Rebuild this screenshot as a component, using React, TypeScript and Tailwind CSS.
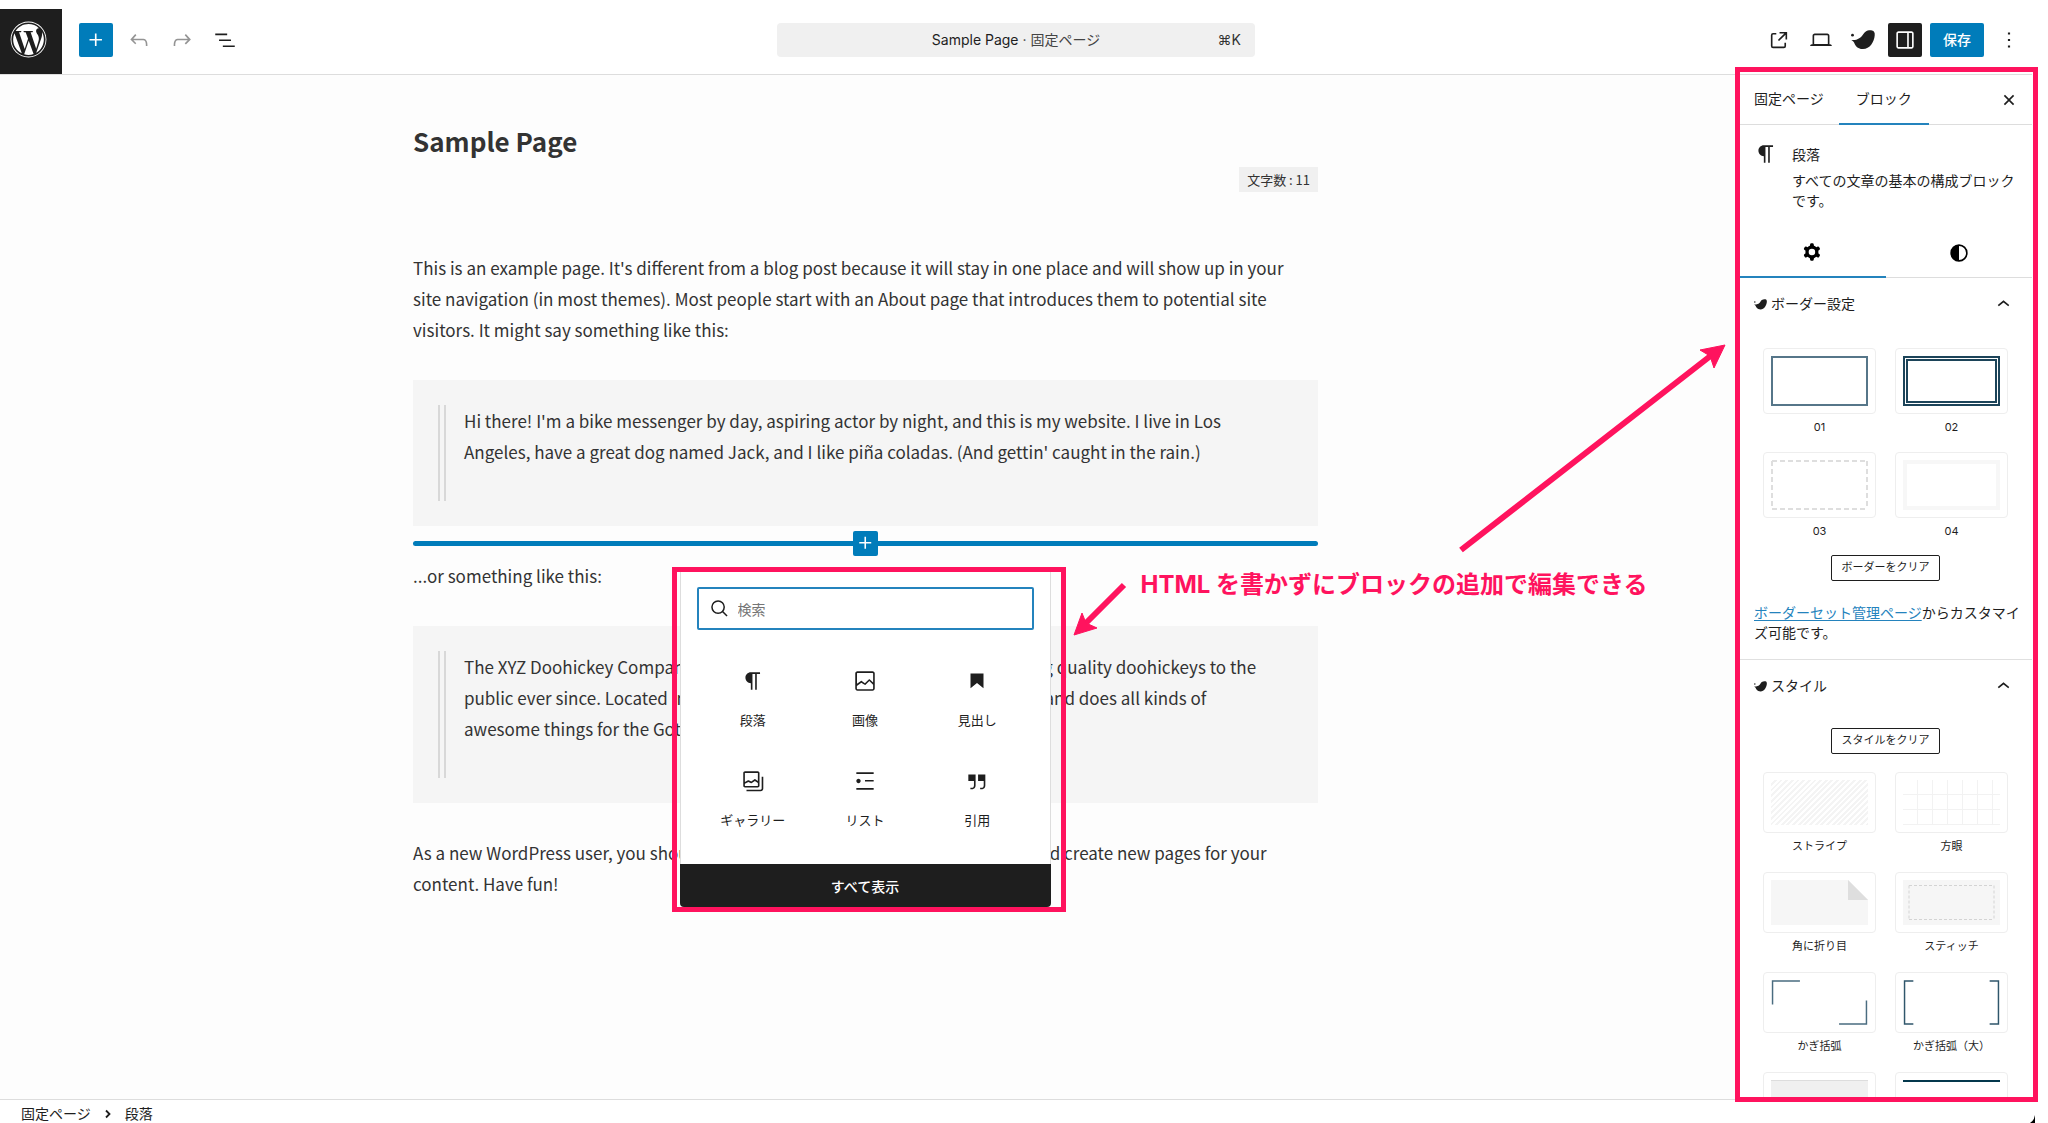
import type { ReactNode } from "react";
import { FaWordpress } from "react-icons/fa";

const Icon = ({ d, className = "size-[26px]" }: { d: string; className?: string }) => (
  <svg viewBox="0 0 24 24" fill="currentColor" fillRule="evenodd" className={className} aria-hidden="true">
    <path d={d} />
  </svg>
);

const icons = {
  plus: "M11 12.5V17.5H12.5V12.5H17.5V11H12.5V6H11V11H6V12.5H11Z",
  undo: "M18.3 11.7c-.6-.6-1.4-.9-2.3-.9H6.7l2.9-3.3-1.1-1-4.5 5L8.5 16l1-1-2.7-2.7H16c.5 0 .9.2 1.3.5 1 1 1 3.4 1 4.5v.3h1.5v-.2c0-1.5 0-4.3-1.5-5.7z",
  redo: "M15.6 6.5l-1.1 1 2.9 3.3H8c-.9 0-1.7.3-2.3.9-1.4 1.5-1.4 4.2-1.4 5.6v.2h1.5v-.3c0-1.1 0-3.5 1-4.5.3-.3.7-.5 1.3-.5h9.2L14.5 15l1.1 1.1 4.6-4.6-4.6-5z",
  listView: "M3 6h11v1.5H3V6Zm3.5 5.5h11V13h-11v-1.5ZM21 17H10v1.5h11V17Z",
  external: "M19.5 4.5h-7V6h4.44l-5.97 5.97 1.06 1.06L18 7.06v4.44h1.5v-7Zm-13 1a2 2 0 0 0-2 2v10a2 2 0 0 0 2 2h10a2 2 0 0 0 2-2v-3H17v3a.5.5 0 0 1-.5.5h-10a.5.5 0 0 1-.5-.5v-10a.5.5 0 0 1 .5-.5h3V5.5h-3Z",
  desktop: "M20.5 16h-.7V8c0-1.1-.9-2-2-2H6.2c-1.1 0-2 .9-2 2v8h-.7c-.8 0-1.5.7-1.5 1.5h20c0-.8-.7-1.5-1.5-1.5zM5.7 8c0-.3.2-.5.5-.5h11.6c.3 0 .5.2.5.5v7.6H5.7V8z",
  drawer: "M18 4H6c-1.1 0-2 .9-2 2v12c0 1.1.9 2 2 2h12c1.1 0 2-.9 2-2V6c0-1.1-.9-2-2-2zm-4 14.5H6c-.3 0-.5-.2-.5-.5V6c0-.3.2-.5.5-.5h8v13zm4.5-.5c0 .3-.2.5-.5.5h-2.5v-13H18c.3 0 .5.2.5.5v12z",
  more: "M13 19h-2v-2h2v2zm0-6h-2v-2h2v2zm0-6h-2V5h2v2z",
  close: "M12 13.06l3.712 3.713 1.061-1.06L13.061 12l3.712-3.712-1.06-1.06L12 10.938 8.288 7.227l-1.061 1.06L10.939 12l-3.712 3.712 1.06 1.061L12 13.061z",
  paragraph: "m9.99609 14v-.2251l.00391.0001v6.225h1.5v-14.5h2.5v14.5h1.5v-14.5h3v-1.5h-8.50391c-2.76142 0-5 2.23858-5 5 0 2.7614 2.23858 5 5 5z",
  image: "M19 3H5c-1.1 0-2 .9-2 2v14c0 1.1.9 2 2 2h14c1.1 0 2-.9 2-2V5c0-1.1-.9-2-2-2zM5 4.5h14c.3 0 .5.2.5.5v8.4l-3-2.9c-.3-.3-.8-.3-1 0L11.9 14 9 12c-.3-.2-.6-.2-.8 0l-3.6 2.6V5c-.1-.3.1-.5.4-.5zm14 15H5c-.3 0-.5-.2-.5-.5v-2.4l4.1-3 3 1.9c.3.2.7.2.9-.1L16 12l3.5 3.4V19c0 .3-.2.5-.5.5z",
  heading: "M6 5V18.5911L12 13.8473L18 18.5911V5H6Z",
  gallery: "M16.375 4.5H4.625a.125.125 0 0 0-.125.125v8.254l2.859-1.54a.75.75 0 0 1 .68-.016l2.384 1.142 2.89-2.074a.75.75 0 0 1 .874 0l2.313 1.66V4.625a.125.125 0 0 0-.125-.125Zm.125 9.398-2.75-1.975-2.813 2.02a.75.75 0 0 1-.76.067l-2.444-1.17L4.5 14.583v1.792c0 .069.056.125.125.125h11.75a.125.125 0 0 0 .125-.125v-2.477ZM4.625 3C3.728 3 3 3.728 3 4.625v11.75C3 17.273 3.728 18 4.625 18h11.75c.898 0 1.625-.727 1.625-1.625V4.625C18 3.728 17.273 3 16.375 3H4.625ZM20 8v11c0 .69-.31 1-.999 1H6v1.5h13.001c1.52 0 2.499-.982 2.499-2.5V8H20Z",
  list: "M4 4v1.5h16V4H4zm8 8.5h8V11h-8v1.5zM4 20h16v-1.5H4V20zm4-8c0-1.1-.9-2-2-2s-2 .9-2 2 .9 2 2 2 2-.9 2-2z",
  quote: "M13 6v6h5.2v4c0 .8-.2 1.4-.5 1.7-.6.6-1.6.6-2.5.5h-.3v1.5h.5c1 0 2.3-.1 3.3-1 .6-.6 1-1.6 1-2.8V6H13zm-9 6h5.2v4c0 .8-.2 1.4-.5 1.7-.6.6-1.6.6-2.5.5h-.3v1.5h.5c1 0 2.3-.1 3.3-1 .6-.6 1-1.6 1-2.8V6H4v6z",
  cog: "M10.289 4.836A1 1 0 0111.275 4h1.306a1 1 0 01.987.836l.244 1.466c.787.26 1.503.679 2.108 1.218l1.393-.522a1 1 0 011.216.437l.653 1.13a1 1 0 01-.23 1.273l-1.148.944a6.025 6.025 0 010 2.435l1.149.946a1 1 0 01.23 1.272l-.653 1.13a1 1 0 01-1.216.437l-1.394-.522c-.605.54-1.32.958-2.108 1.218l-.244 1.466a1 1 0 01-.987.836h-1.306a1 1 0 01-.986-.836l-.244-1.466a5.995 5.995 0 01-2.108-1.218l-1.394.522a1 1 0 01-1.217-.436l-.653-1.131a1 1 0 01.23-1.272l1.149-.946a6.026 6.026 0 010-2.435l-1.148-.944a1 1 0 01-.23-1.272l.653-1.131a1 1 0 011.217-.437l1.393.522a5.994 5.994 0 012.108-1.218l.244-1.466zM14.929 12a3 3 0 11-6 0 3 3 0 016 0z",
  styles: "M20 12a8 8 0 1 1-16 0 8 8 0 0 1 16 0Zm-1.5 0a6.5 6.5 0 0 1-6.5 6.5v-13a6.5 6.5 0 0 1 6.5 6.5Z",
  chevronUp: "M6.5 12.4L12 8l5.5 4.4-.9 1.2L12 10l-4.5 3.6-1-1.2z",
};

const Bird = ({ className }: { className: string }) => (
  <svg viewBox="0 0 24 20" fill="currentColor" className={className} aria-hidden="true">
    <circle cx="1.5" cy="5.2" r="1.4" />
    <path d="M.3 10C2 10.100 3.600 10.200 5.300 9.700 7.500 9 9.200 8.100 10.500 6.600 12 4.900 12.800 2.900 14.500 1.700 16.300.4 19 .1 21 .5 23.200 1 24 2.800 23.700 5.400 23.400 8.600 22.300 11.800 20.200 14.700 18.300 17.300 15.300 19 12 19 9 19 6.700 18.100 5.100 16.200 3.800 14.700 3.600 12.900 2.500 11.700 1.900 11 1.100 10.600.3 10Z" />
  </svg>
);

const ToolButton = ({ label, className = "", children }: { label: string; className?: string; children: ReactNode }) => (
  <button type="button" aria-label={label} className={`flex size-[34px] shrink-0 items-center justify-center rounded-xs ${className}`}>
    {children}
  </button>
);

const Header = () => (
  <header className="mt-[9px] grid h-[66px] shrink-0 grid-cols-[1fr_478px_1fr] items-stretch border-b border-[#ddd]">
    <div className="flex">
      <a href="#" aria-label="WordPress" className="mr-[17px] flex w-[62px] items-center justify-center bg-[#1e1e1e] pr-1.5 pb-1 text-white">
        <FaWordpress className="size-[37px]" />
      </a>
      <div className="flex items-center gap-[9px] pb-1">
        <ToolButton label="追加" className="bg-[#007cba] text-white"><Icon d={icons.plus} /></ToolButton>
        <ToolButton label="元に戻す" className="text-[#949494]"><Icon d={icons.undo} /></ToolButton>
        <ToolButton label="やり直す" className="text-[#949494]"><Icon d={icons.redo} /></ToolButton>
        <ToolButton label="リスト表示"><Icon d={icons.listView} /></ToolButton>
      </div>
    </div>
    <button type="button" className="relative mb-1 flex h-[34px] items-center justify-center self-center rounded bg-[#f0f0f0] text-sm">
      <span>Sample Page</span>
      <span className="text-[#444]">&nbsp;· 固定ページ</span>
      <span className="absolute right-3.5 text-[#333]">⌘K</span>
    </button>
    <div className="flex items-center justify-end gap-2 pr-1.5 pb-1">
      <ToolButton label="表示"><Icon d={icons.external} /></ToolButton>
      <ToolButton label="プレビュー"><Icon d={icons.desktop} /></ToolButton>
      <ToolButton label="SWELL"><Bird className="h-5 w-6" /></ToolButton>
      <ToolButton label="設定" className="bg-[#1e1e1e] text-white"><Icon d={icons.drawer} /></ToolButton>
      <button type="button" className="h-[34px] rounded-xs bg-[#007cba] px-[13px] text-sm font-medium text-white">保存</button>
      <ToolButton label="オプション"><Icon d={icons.more} /></ToolButton>
    </div>
  </header>
);

const Quote = ({ children }: { children: ReactNode }) => (
  <blockquote className="flex gap-[18px] bg-[#f5f5f5] p-[25px]">
    <div className="w-2 shrink-0 border-x-2 border-[#d8d8d8]" />
    <p className="pb-[34px]">{children}</p>
  </blockquote>
);

const blocks = [
  { name: "段落", icon: icons.paragraph },
  { name: "画像", icon: icons.image },
  { name: "見出し", icon: icons.heading },
  { name: "ギャラリー", icon: icons.gallery },
  { name: "リスト", icon: icons.list },
  { name: "引用", icon: icons.quote },
];

const BlockPicker = () => (
  <div className="absolute top-[41px] left-1/2 -ml-[194px] w-[394px] border-[5px] border-[#ff135e] pr-[10px] pl-[3px] text-[#1e1e1e]">
    <div className="overflow-hidden rounded-b bg-white">
      <div className="border-x border-[#ddd] px-4 pt-[15px] pb-5">
        <label className="flex h-[43px] items-center gap-2.5 rounded-xs border-2 border-[#2483bd] px-3">
          <svg viewBox="0 0 18 18" fill="none" stroke="currentColor" strokeWidth="1.6" className="size-[17px] shrink-0" aria-hidden="true">
            <circle cx="7.500" cy="7.500" r="6.500" />
            <path d="M12.200 12.200 17 17" />
          </svg>
          <input type="search" aria-label="検索" placeholder="検索" className="w-full bg-transparent text-sm outline-none placeholder:text-[#757575]" />
        </label>
        <div className="mt-3.5 grid grid-cols-3">
          {blocks.map((block) => (
            <button key={block.name} type="button" className="flex h-[100px] flex-col items-center gap-4 pt-6 text-[13px] leading-5">
              <Icon d={block.icon} />
              {block.name}
            </button>
          ))}
        </div>
      </div>
      <button type="button" className="block h-[43px] w-full bg-[#1e1e1e] text-sm font-medium text-white">すべて表示</button>
    </div>
  </div>
);

// line between two blocks, with the open picker and the notes that hang off it
const Inserter = () => (
  <div className="relative z-10 flex h-[34px] items-center justify-center">
    <div className="h-[5px] flex-1 rounded-l-full bg-[#007cba]" />
    <button type="button" aria-label="ブロックを追加" className="flex size-[25px] items-center justify-center rounded-xs bg-[#007cba] text-white">
      <Icon d={icons.plus} />
    </button>
    <div className="h-[5px] flex-1 rounded-r-full bg-[#007cba]" />
    <BlockPicker />
    <svg viewBox="0 0 670 310" className="pointer-events-none absolute -top-[190px] left-1/2 ml-[199px] h-[310px] w-[670px]" fill="#ff135e" stroke="#ff135e" aria-hidden="true">
      <path d="M396 214 648 18M59 249 19 289" strokeWidth="6" />
      <path d="M660 9 635 14 645 20 649 32ZM9 299 17 277 21 287 32 292Z" strokeWidth="1" />
    </svg>
    <p className="absolute top-[41px] left-1/2 ml-[275px] font-['Inter','Noto_Sans_CJK_JP',sans-serif] text-[24px] leading-9 font-bold whitespace-nowrap text-[#ff135e]">
      HTML を書かずにブロックの追加で編集できる
    </p>
  </div>
);

const Editor = () => (
  <main className="min-w-0 flex-1 bg-[#fdfdfd] pt-12 pr-2">
    <article className="mx-auto max-w-[905px] font-['Noto_Sans_CJK_JP',sans-serif] text-[17px] leading-[31px] text-[#333]">
      <h1 className="text-[26px] leading-9 font-bold">Sample Page</h1>
      <div className="mt-2 mb-[60px] flex justify-end">
        <span className="bg-[#f0f0f0] px-2 text-[13px] leading-[25px]">文字数 : 11</span>
      </div>
      <p className="mb-[35px]">
        This is an example page. It's different from a blog post because it will stay in one place and will show up in your
        <br />site navigation (in most themes). Most people start with an About page that introduces them to potential site
        <br />visitors. It might say something like this:
      </p>
      <Quote>
        Hi there! I'm a bike messenger by day, aspiring actor by night, and this is my website. I live in Los
        <br />Angeles, have a great dog named Jack, and I like piña coladas. (And gettin' caught in the rain.)
      </Quote>
      <Inserter />
      <p className="mb-[35px]">...or something like this:</p>
      <Quote>
        The XYZ Doohickey Company was founded in 1971, and has been providing quality doohickeys to the
        <br />public ever since. Located in Gotham City, XYZ employs over 2,000 people and does all kinds of
        <br />awesome things for the Gotham community.
      </Quote>
      <p className="mt-[34px]">
        As a new WordPress user, you should go to your dashboard to delete this page and create new pages for your
        <br />content. Have fun!
      </p>
    </article>
  </main>
);

const Tile = ({ label, className = "h-[61px]", children }: { label: string; className?: string; children: ReactNode }) => (
  <button type="button" className="text-[11px] leading-4">
    <div className={`mb-[5px] rounded border border-[#eee] p-[7px] ${className}`}>{children}</div>
    {label}
  </button>
);

const Section = ({ title, children }: { title: string; children: ReactNode }) => (
  <section className="border-b border-[#e0e0e0] pb-4">
    <h2>
      <button type="button" className="flex h-[52px] w-full items-center gap-1 pr-4 pl-[15px]">
        <Bird className="h-[11px] w-[13px]" />
        {title}
        <Icon d={icons.chevronUp} className="ml-auto size-[25px]" />
      </button>
    </h2>
    {children}
  </section>
);

const ClearButton = ({ children }: { children: ReactNode }) => (
  <button type="button" className="mx-auto mt-4 block h-[26px] w-[109px] rounded-xs border border-[#1e1e1e] text-[11px]">
    {children}
  </button>
);

const Sidebar = () => (
  <aside className="relative z-20 w-[293px] shrink-0">
    <div className="h-full overflow-hidden bg-white">
      <div className="flex h-[50px] items-stretch border-b border-[#ddd]">
        <button type="button" className="px-[15px] pb-0.5">固定ページ</button>
        <button type="button" className="-mb-px border-b-2 border-[#2483bd] px-[17px]">ブロック</button>
        <button type="button" aria-label="閉じる" className="ml-auto pr-2.5"><Icon d={icons.close} /></button>
      </div>
      <div className="flex gap-[13px] px-[14px] pt-5 pb-[17px] leading-5">
        <Icon d={icons.paragraph} className="-mt-1 size-[26px] shrink-0" />
        <div>
          <h2 className="mb-[6px]">段落</h2>
          <p className="w-[226px]">すべての文章の基本の構成ブロックです。</p>
        </div>
      </div>
      <div className="flex h-[50px] border-b border-[#ddd]">
        <button type="button" aria-label="設定" className="-mb-px flex flex-1 items-center justify-center border-b-2 border-[#2483bd] text-black"><Icon d={icons.cog} /></button>
        <button type="button" aria-label="スタイル" className="flex flex-1 items-center justify-center text-black"><Icon d={icons.styles} /></button>
      </div>
      <Section title="ボーダー設定">
        <div className="grid grid-cols-2 gap-x-[19px] gap-y-[17px] px-6 pt-[18px]">
          <Tile label="01" className="h-[66px]"><div className="h-full border-2 border-[#567689]" /></Tile>
          <Tile label="02" className="h-[66px]"><div className="h-full border-[5px] border-double border-[#1c4459]" /></Tile>
          <Tile label="03" className="h-[66px]">
            <svg viewBox="0 0 97 50" preserveAspectRatio="none" className="h-full w-full" fill="none" stroke="#dedede" strokeWidth="2" strokeDasharray="5 3" aria-hidden="true">
              <path d="M1 1H96M1 49H96M1 1V49M96 1V49" />
            </svg>
          </Tile>
          <Tile label="04" className="h-[66px]"><div className="h-full border-4 border-[#f7f7f7]" /></Tile>
        </div>
        <ClearButton>ボーダーをクリア</ClearButton>
        <p className="mt-[22px] pr-1 pl-[15px] leading-5">
          <a href="#" className="text-[#2483bd] underline underline-offset-2">ボーダーセット管理ページ</a>からカスタマイズ可能です。
        </p>
      </Section>
      <Section title="スタイル">
        <ClearButton>スタイルをクリア</ClearButton>
        <div className="grid grid-cols-2 gap-x-[19px] gap-y-[18px] px-6 pt-[18px]">
          <Tile label="ストライプ">
            <div className="h-full bg-[repeating-linear-gradient(-45deg,#f4f4f4_0px,#f4f4f4_2px,#fff_2px,#fff_4px)]" />
          </Tile>
          <Tile label="方眼">
            <div className="h-full bg-[linear-gradient(to_right,transparent_14px,#f2f2f2_14px),linear-gradient(to_bottom,transparent_14px,#f2f2f2_14px)] bg-[length:15px_15px]" />
          </Tile>
          <Tile label="角に折り目">
            <div className="flex h-full justify-end bg-[linear-gradient(225deg,#fff_14px,#f6f6f6_14px)]">
              <svg viewBox="0 0 20 20" className="size-5" aria-hidden="true"><path d="M0 0V20H20Z" fill="#dedede" /></svg>
            </div>
          </Tile>
          <Tile label="スティッチ">
            <div className="h-full bg-[#f6f6f6] p-[5px]">
              <svg viewBox="0 0 87 35" preserveAspectRatio="none" className="h-full w-full" fill="none" stroke="#d4d4d4" strokeDasharray="3 2" aria-hidden="true">
                <path d="M1 .5H86M1 34.500H86M1 .5V34.500M86 .5V34.500" />
              </svg>
            </div>
          </Tile>
          <Tile label="かぎ括弧">
            <svg viewBox="0 0 98 46" className="h-full w-full" fill="none" stroke="#4a6c80" strokeWidth="1.500" aria-hidden="true">
              <path d="M1 25V1H29M69 45H97V21" />
            </svg>
          </Tile>
          <Tile label="かぎ括弧（大）">
            <svg viewBox="0 0 98 46" className="h-full w-full" fill="none" stroke="#2f566b" strokeWidth="1.500" aria-hidden="true">
              <path d="M10 1H1V45H10M88 1H97V45H88" />
            </svg>
          </Tile>
          <Tile label=""><div className="h-full border-t border-[#ddd] bg-[#f0f0f0]" /></Tile>
          <Tile label=""><div className="h-full border-t-2 border-[#04384c]" /></Tile>
        </div>
      </Section>
    </div>
    <div className="pointer-events-none absolute -top-2 -right-1.5 -bottom-[3px] -left-1 border-[5px] border-[#ff135e]" />
  </aside>
);

export default function App() {
  return (
    <div className="relative flex h-screen flex-col overflow-hidden bg-white pr-4 font-['Inter','Noto_Sans_CJK_JP',sans-serif] text-sm text-[#1e1e1e]">
      <Header />
      <div className="flex min-h-0 flex-1">
        <Editor />
        <Sidebar />
      </div>
      <footer className="flex h-6 shrink-0 items-center gap-3.5 border-t border-[#ddd] pt-1 pl-[21px]">
        <span>固定ページ</span>
        <svg viewBox="0 0 6 10" className="h-2.5 w-1.5" fill="none" stroke="currentColor" strokeWidth="1.800" aria-hidden="true"><path d="M1 1.500 4.500 5 1 8.500" /></svg>
        <span>段落</span>
      </footer>
      <svg viewBox="0 0 5 8" className="absolute right-[13px] bottom-0 h-2 w-[5px]" aria-hidden="true"><path d="M5 0V8H0Q4 6 5 0Z" /></svg>
    </div>
  );
}
